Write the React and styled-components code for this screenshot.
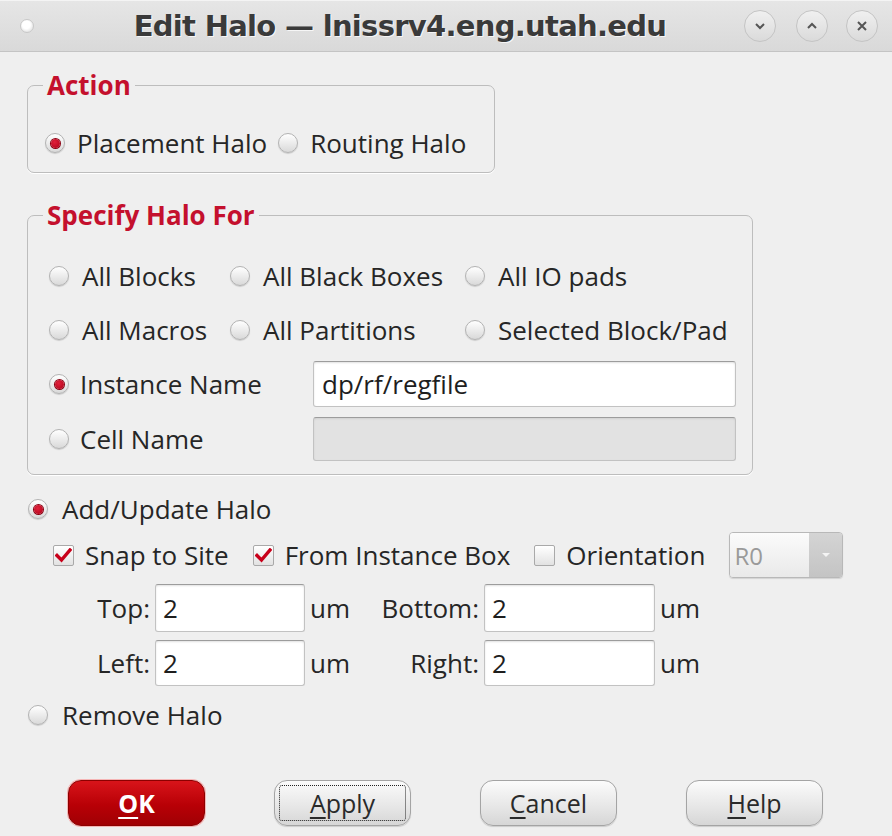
import React from "react";
import styled, { createGlobalStyle, css } from "styled-components";

const GlobalStyle = createGlobalStyle`
  html, body { margin: 0; padding: 0; background: #efefef; }
  * { box-sizing: border-box; }
`;

const Window = styled.div`
  width: 892px;
  height: 836px;
  background: #efefef;
  display: flex;
  flex-direction: column;
  font-family: "Open Sans", "Noto Sans", sans-serif;
  font-size: 26px;
  color: #262626;
  overflow: hidden;
`;

const TitleBar = styled.div`
  height: 52px;
  flex: none;
  display: flex;
  align-items: center;
  padding: 0 14px 0 20px;
  background: linear-gradient(#e6e6e6, #d9d9d9);
  border-bottom: 1px solid #c4c4c4;
  box-shadow: inset 0 1px 0 #f4f4f4;
`;

const TitleDot = styled.span`
  width: 14px;
  height: 14px;
  border-radius: 50%;
  background: radial-gradient(circle at 45% 40%, #ffffff 40%, #e8e8e8 70%);
  border: 1px solid #c8c8c8;
`;

const TitleText = styled.div`
  flex: 1;
  text-align: center;
  margin-left: 22px;
  font-family: "DejaVu Sans", sans-serif;
  font-weight: bold;
  font-size: 29px;
  letter-spacing: -0.7px;
  color: #3a3a3a;
  text-shadow: 1px 1px 0 #f6f6f6;
`;

const WinButtons = styled.div`
  display: flex;
  gap: 18px;
`;

const WinButton = styled.span`
  width: 32px;
  height: 32px;
  border-radius: 50%;
  border: 1px solid #c4c4c4;
  background: linear-gradient(#f0f0f0, #dadada);
  display: flex;
  align-items: center;
  justify-content: center;
  margin-right: ${(p) => p.$mr ?? 0}px;
`;

const Body = styled.div`
  flex: 1;
  display: flex;
  flex-direction: column;
  padding: 0 0 0 27px;
`;

const Group = styled.fieldset`
  margin: ${(p) => p.$mt}px 0 0 0;
  width: ${(p) => p.$w}px;
  padding: ${(p) => p.$pad};
  border: 1px solid #bdbdbd;
  border-radius: 7px;
  box-shadow: 0 1px 0 #ffffff;
  min-width: 0;
`;

const Legend = styled.legend`
  margin-left: 15px;
  padding: 0 4px;
  font-weight: bold;
  line-height: 30px;
  color: #c4102d;
`;

const Option = styled.label`
  display: flex;
  align-items: center;
  gap: ${(p) => p.$gap ?? 13}px;
  height: 30px;
  line-height: 30px;
  white-space: nowrap;
`;

const RadioCircle = styled.span`
  flex: none;
  width: 20px;
  height: 20px;
  border-radius: 50%;
  border: 1px solid #b3b3b3;
  background: linear-gradient(#ffffff, #d9d9d9);
  box-shadow: 0 1px 1px rgba(0, 0, 0, 0.15);
  display: flex;
  align-items: center;
  justify-content: center;
  ${(p) =>
    p.$checked &&
    css`
      &::after {
        content: "";
        width: 9px;
        height: 9px;
        border-radius: 50%;
        background: radial-gradient(circle at 40% 35%, #e0203a, #b00018);
        box-shadow: 0 0 0 1px #8a0012;
      }
    `}
`;

const CheckBox = styled.span`
  flex: none;
  width: 21px;
  height: 21px;
  border: 1px solid #a9a9a9;
  border-radius: 2px;
  background: linear-gradient(#ffffff, #e2e2e2);
  display: flex;
  align-items: center;
  justify-content: center;
`;

const ActionRow = styled.div`
  display: flex;
  gap: 11px;
  padding-left: 17px;
`;

const ChoiceGrid = styled.div`
  display: grid;
  grid-template-columns: 181px 235px auto;
  padding-left: 21px;
  row-gap: 24px;
`;

const FieldRow = styled.div`
  display: grid;
  grid-template-columns: 264px 423px;
  align-items: center;
  padding-left: 21px;
  height: ${(p) => p.$h}px;
  margin-top: ${(p) => p.$mt ?? 0}px;
`;

const TextField = styled.div`
  height: ${(p) => p.$h ?? 46}px;
  border: 1px solid #c2c2c2;
  border-top-color: #9c9c9c;
  border-radius: 3px;
  background: ${(p) => (p.$disabled ? "#e2e2e2" : "#ffffff")};
  box-shadow: inset 0 1px 2px rgba(0, 0, 0, ${(p) => (p.$disabled ? 0.08 : 0.12)});
  padding-left: ${(p) => p.$pl ?? 8}px;
  display: flex;
  align-items: center;
  color: #1e1e1e;
`;

const TopOption = styled(Option)`
  margin-left: 1px;
  margin-top: ${(p) => p.$mt}px;
`;

const CheckRow = styled.div`
  display: flex;
  align-items: center;
  gap: 24px;
  margin-top: 8px;
  padding-left: 26px;
`;

const Combo = styled.div`
  width: 114px;
  height: 46px;
  border: 1px solid #b8b8b8;
  border-radius: 4px;
  display: flex;
  overflow: hidden;
  box-shadow: 0 1px 1px rgba(0, 0, 0, 0.12);
`;

const ComboText = styled.span`
  flex: 1;
  background: linear-gradient(#fbfbfb, #e9e9e9);
  color: #9a9a9a;
  font-size: 24px;
  padding-left: 4px;
  display: flex;
  align-items: center;
`;

const ComboArrow = styled.span`
  width: 33px;
  background: linear-gradient(#d4d4d4, #c4c4c4);
  display: flex;
  align-items: center;
  justify-content: center;
`;

const MarginGrid = styled.div`
  display: grid;
  grid-template-columns: 123px 150px 40px 124px 171px auto;
  column-gap: 5px;
  row-gap: 8px;
  align-items: center;
  margin-top: 6px;
`;

const MarginLabel = styled.span`
  text-align: right;
`;

const Unit = styled.span``;

const ButtonBar = styled.div`
  margin-top: auto;
  margin-bottom: 10px;
  display: flex;
  padding-left: 41px;
  gap: 69px;
`;

const Button = styled.button`
  width: 137px;
  height: 46px;
  border-radius: 13px;
  font-family: "Open Sans", "Noto Sans", sans-serif;
  font-size: 25px;
  display: flex;
  align-items: center;
  justify-content: center;
  padding: 0;
  cursor: default;
  ${(p) =>
    p.$primary
      ? css`
          color: #ffffff;
          font-weight: bold;
          border: 1px solid #8c0000;
          background: linear-gradient(#d8141a, #b80006 55%, #a00004);
          box-shadow: 0 0 0 1px #f5b5b5;
        `
      : css`
          color: #2a2a2a;
          border: 1px solid #a4a4a4;
          background: linear-gradient(#fbfbfb, #e6e6e6 60%, #d6d6d6);
          box-shadow: 0 1px 1px rgba(0, 0, 0, 0.15);
        `}
`;

const FocusRing = styled.span`
  border: 1px dotted #222;
  border-radius: 3px;
  width: 127px;
  height: 36px;
  display: flex;
  align-items: center;
  justify-content: center;
`;

const Mn = styled.span`
  text-decoration: underline;
  text-underline-offset: 4px;
`;

function Radio({ checked, label, gap }) {
  return (
    <Option $gap={gap}>
      <RadioCircle $checked={checked} />
      {label}
    </Option>
  );
}

function Check({ checked, label }) {
  return (
    <Option $gap={11}>
      <CheckBox>
        {checked && (
          <svg width="17" height="15" viewBox="0 0 17 15">
            <path d="M2 7.5 L6.5 12 L15 2" fill="none" stroke="#c8001a" strokeWidth="3.4" strokeLinecap="square" />
          </svg>
        )}
      </CheckBox>
      {label}
    </Option>
  );
}

export default function App() {
  return (
    <>
      <GlobalStyle />
      <Window>
        <TitleBar>
          <TitleDot />
          <TitleText>Edit Halo — lnissrv4.eng.utah.edu</TitleText>
          <WinButtons>
            <WinButton $mr={2}>
              <svg width="12" height="8" viewBox="0 0 12 8">
                <path d="M2 2 L6 6 L10 2" fill="none" stroke="#555" strokeWidth="2" />
              </svg>
            </WinButton>
            <WinButton>
              <svg width="12" height="8" viewBox="0 0 12 8">
                <path d="M2 6 L6 2 L10 6" fill="none" stroke="#555" strokeWidth="2" />
              </svg>
            </WinButton>
            <WinButton>
              <svg width="12" height="12" viewBox="0 0 12 12">
                <path d="M2 2 L10 10 M10 2 L2 10" fill="none" stroke="#555" strokeWidth="2" />
              </svg>
            </WinButton>
          </WinButtons>
        </TitleBar>

        <Body>
          <Group $mt={18} $w={468} $pad="28px 0 14px 0">
            <Legend>Action</Legend>
            <ActionRow>
              <Radio checked gap={12} label="Placement Halo" />
              <Radio gap={12} label="Routing Halo" />
            </ActionRow>
          </Group>

          <Group $mt={27} $w={726} $pad="31px 0 7px 0">
            <Legend>Specify Halo For</Legend>
            <ChoiceGrid>
              <Radio label="All Blocks" />
              <Radio label="All Black Boxes" />
              <Radio label="All IO pads" />
              <Radio label="All Macros" />
              <Radio label="All Partitions" />
              <Radio label="Selected Block/Pad" />
            </ChoiceGrid>
            <FieldRow $h={54} $mt={12}>
              <Radio checked gap={11} label="Instance Name" />
              <TextField>dp/rf/regfile</TextField>
            </FieldRow>
            <FieldRow $h={56}>
              <Radio gap={11} label="Cell Name" />
              <TextField $disabled $h={44} />
            </FieldRow>
          </Group>

          <TopOption $mt={19} $gap={14}>
            <RadioCircle $checked />
            Add/Update Halo
          </TopOption>

          <CheckRow>
            <Check checked label="Snap to Site" />
            <Check checked label="From Instance Box" />
            <Check label="Orientation" />
            <Combo>
              <ComboText>R0</ComboText>
              <ComboArrow>
                <svg width="10" height="6" viewBox="0 0 10 6">
                  <path d="M1 1 L5 5 L9 1 Z" fill="#f4f4f4" />
                </svg>
              </ComboArrow>
            </Combo>
          </CheckRow>

          <MarginGrid>
            <MarginLabel>Top:</MarginLabel>
            <TextField $h={48} $pl={7}>2</TextField>
            <Unit>um</Unit>
            <MarginLabel>Bottom:</MarginLabel>
            <TextField $h={48} $pl={7}>2</TextField>
            <Unit>um</Unit>
            <MarginLabel>Left:</MarginLabel>
            <TextField $h={46} $pl={7}>2</TextField>
            <Unit>um</Unit>
            <MarginLabel>Right:</MarginLabel>
            <TextField $h={46} $pl={7}>2</TextField>
            <Unit>um</Unit>
          </MarginGrid>

          <TopOption $mt={14} $gap={14}>
            <RadioCircle />
            Remove Halo
          </TopOption>

          <ButtonBar>
            <Button $primary>
              <Mn>O</Mn>K
            </Button>
            <Button>
              <FocusRing>
                <Mn>A</Mn>pply
              </FocusRing>
            </Button>
            <Button>
              <Mn>C</Mn>ancel
            </Button>
            <Button>
              <Mn>H</Mn>elp
            </Button>
          </ButtonBar>
        </Body>
      </Window>
    </>
  );
}
